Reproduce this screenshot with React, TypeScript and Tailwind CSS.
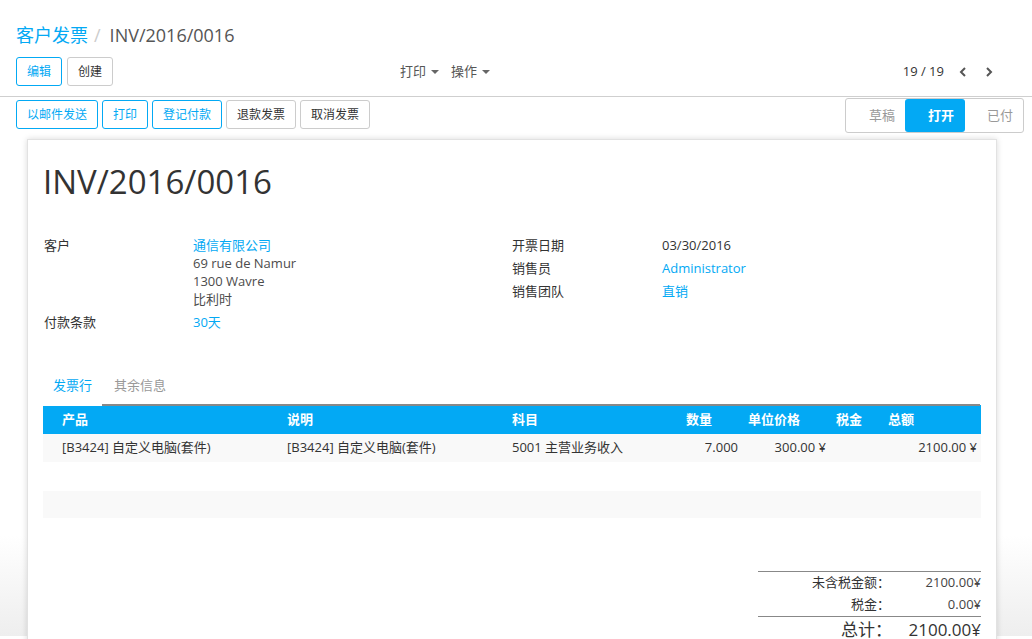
import React from "react";

const font = { fontFamily: '"Open Sans", "Noto Sans CJK SC", sans-serif' };

const Btn = ({ label, primary }: { label: string; primary?: boolean }) => (
  <button
    className={`h-[29px] px-[10px] rounded-[3px] border bg-white text-[12px] leading-none ${
      primary ? "border-[#03a9f4] text-[#03a9f4]" : "border-[#cccccc] text-[#333333]"
    }`}
  >
    {label}
  </button>
);

const Caret = () => (
  <span className="inline-block ml-[5px] align-middle w-0 h-0 border-l-[4px] border-r-[4px] border-t-[4px] border-l-transparent border-r-transparent border-t-[#666]" />
);

const App = () => {
  return (
    <div className="w-[1032px] h-[639px] overflow-hidden bg-white text-[13px] text-[#4c4c4c]" style={font}>
      {/* control panel */}
      <div className="px-4 pt-[21px] pb-[10px] border-b border-[#cfcfcf]">
        <div className="text-[18px] leading-[28px]">
          <span className="text-[#03a9f4]">客户发票</span>
          <span className="text-[#cccccc] ml-[6px] mr-[9px]">/</span>
          <span className="text-[#555]">INV/2016/0016</span>
        </div>
        <div className="flex items-center mt-[8px]">
          <div className="flex gap-[5px] w-[384px]">
            <Btn label="编辑" primary />
            <Btn label="创建" />
          </div>
          <div className="flex gap-[12px] text-[#555] text-[13px]">
            <span>
              打印
              <Caret />
            </span>
            <span>
              操作
              <Caret />
            </span>
          </div>
          <div className="ml-auto flex items-center mr-[22px] text-[#333]">
            <span>19 / 19</span>
            <svg className="ml-[14px]" width="10" height="12" viewBox="0 0 10 12">
              <path d="M7 2 L3 6 L7 10" fill="none" stroke="#555" strokeWidth="2" />
            </svg>
            <svg className="ml-[16px]" width="10" height="12" viewBox="0 0 10 12">
              <path d="M3 2 L7 6 L3 10" fill="none" stroke="#555" strokeWidth="2" />
            </svg>
          </div>
        </div>
      </div>
      {/* status bar row */}
      <div className="flex items-start pl-4 pr-[8px] h-[37px]">
        <div className="flex gap-[4px] mt-[3px]">
          <Btn label="以邮件发送" primary />
          <Btn label="打印" primary />
          <Btn label="登记付款" primary />
          <Btn label="退款发票" />
          <Btn label="取消发票" />
        </div>
        <div className="ml-auto flex h-[35px] mt-[1px] border border-[#cccccc] rounded-[3px] overflow-hidden text-[13px]">
          <div className="w-[59px] flex items-center justify-end pr-[10px] text-[#999]">草稿</div>
          <div className="w-[60px] flex items-center justify-end pr-[11px] bg-[#03a9f4] text-white font-semibold rounded-[3px]">
            打开
          </div>
          <div className="w-[58px] flex items-center justify-end pr-[10px] text-[#999]">已付</div>
        </div>
      </div>
      {/* sheet */}
      <div className="bg-gradient-to-b from-white from-80% to-[#eeeeee] h-[502px] pt-[5px] px-[27px]">
        <div className="w-[970px] h-[600px] bg-white border-l border-r border-t border-[#e2e2e2] shadow-[0_0_6px_rgba(0,0,0,0.15)] pl-[15px] pr-[16px] pt-[20px]">
          <h1 className="text-[33px] leading-[44px] text-[#333]">INV/2016/0016</h1>
          <div className="flex mt-[32px] pl-[1px]">
            <div className="w-[468px]">
              <div className="flex">
                <div className="w-[149px] text-[#333] leading-[18px]">客户</div>
                <div className="leading-[18px]">
                  <div className="text-[#03a9f4]">通信有限公司</div>
                  <div>69 rue de Namur</div>
                  <div>1300 Wavre</div>
                  <div>比利时</div>
                </div>
              </div>
              <div className="flex mt-[5px] leading-[18px]">
                <div className="w-[149px] text-[#333]">付款条款</div>
                <div className="text-[#03a9f4]">30天</div>
              </div>
            </div>
            <div className="leading-[18px]">
              <div className="flex">
                <div className="w-[150px] text-[#333]">开票日期</div>
                <div className="text-[#333]">03/30/2016</div>
              </div>
              <div className="flex mt-[5px]">
                <div className="w-[150px] text-[#333]">销售员</div>
                <div className="text-[#03a9f4]">Administrator</div>
              </div>
              <div className="flex mt-[5px]">
                <div className="w-[150px] text-[#333]">销售团队</div>
                <div className="text-[#03a9f4]">直销</div>
              </div>
            </div>
          </div>
          {/* tabs */}
          <div className="mt-[41px] flex text-[13px] h-[34px]">
            <div className="w-[59px] pl-[10px] pt-[4px] text-[#03a9f4] bg-white">发票行</div>
            <div className="flex-1 flex border-b-2 border-[#888]">
              <div className="pl-[12px] pt-[4px] text-[#999]">其余信息</div>
            </div>
          </div>
          {/* table */}
          <div className="w-[938px] -mt-[1px]">
            <div className="flex h-[29px] items-center bg-[#03a9f4] text-white font-bold">
              <div className="w-[244px] pl-[19px]">产品</div>
              <div className="w-[225px]">说明</div>
              <div className="w-[161px]">科目</div>
              <div className="w-[67px] text-right pr-[28px]">数量</div>
              <div className="w-[88px] text-right pr-[28px]">单位价格</div>
              <div className="w-[60px] text-right pr-[26px]">税金</div>
              <div className="flex-1">总额</div>
            </div>
            <div className="flex h-[28px] items-center bg-[#f9f9f9] text-[#333]">
              <div className="w-[244px] pl-[19px]">[B3424] 自定义电脑(套件)</div>
              <div className="w-[225px]">[B3424] 自定义电脑(套件)</div>
              <div className="w-[161px]">5001 主营业务收入</div>
              <div className="w-[67px] text-right pr-[2px]">7.000</div>
              <div className="w-[88px] text-right pr-[2px]">300.00 ¥</div>
              <div className="flex-1 text-right pr-[4px]">2100.00 ¥</div>
            </div>
            <div className="h-[29px]" />
            <div className="h-[27px] bg-[#f9f9f9]" />
          </div>
          {/* totals */}
          <div className="flex justify-end mt-[53px] w-[938px]">
            <div className="w-[223px] text-[#333]">
              <div className="border-t border-[#888] flex h-[22px] items-center pt-[1px]">
                <div className="w-[132px] text-right">未含税金额：</div>
                <div className="flex-1 text-right text-[#444]">2100.00¥</div>
              </div>
              <div className="flex h-[23px] items-center">
                <div className="w-[132px] text-right">税金：</div>
                <div className="flex-1 text-right text-[#444]">0.00¥</div>
              </div>
              <div className="border-t border-[#888] flex h-[26px] items-end text-[17px] leading-[24px]">
                <div className="w-[134px] text-right">总计：</div>
                <div className="flex-1 text-right">2100.00¥</div>
              </div>
            </div>
          </div>
        </div>
      </div>
    </div>
  );
};

export default App;
